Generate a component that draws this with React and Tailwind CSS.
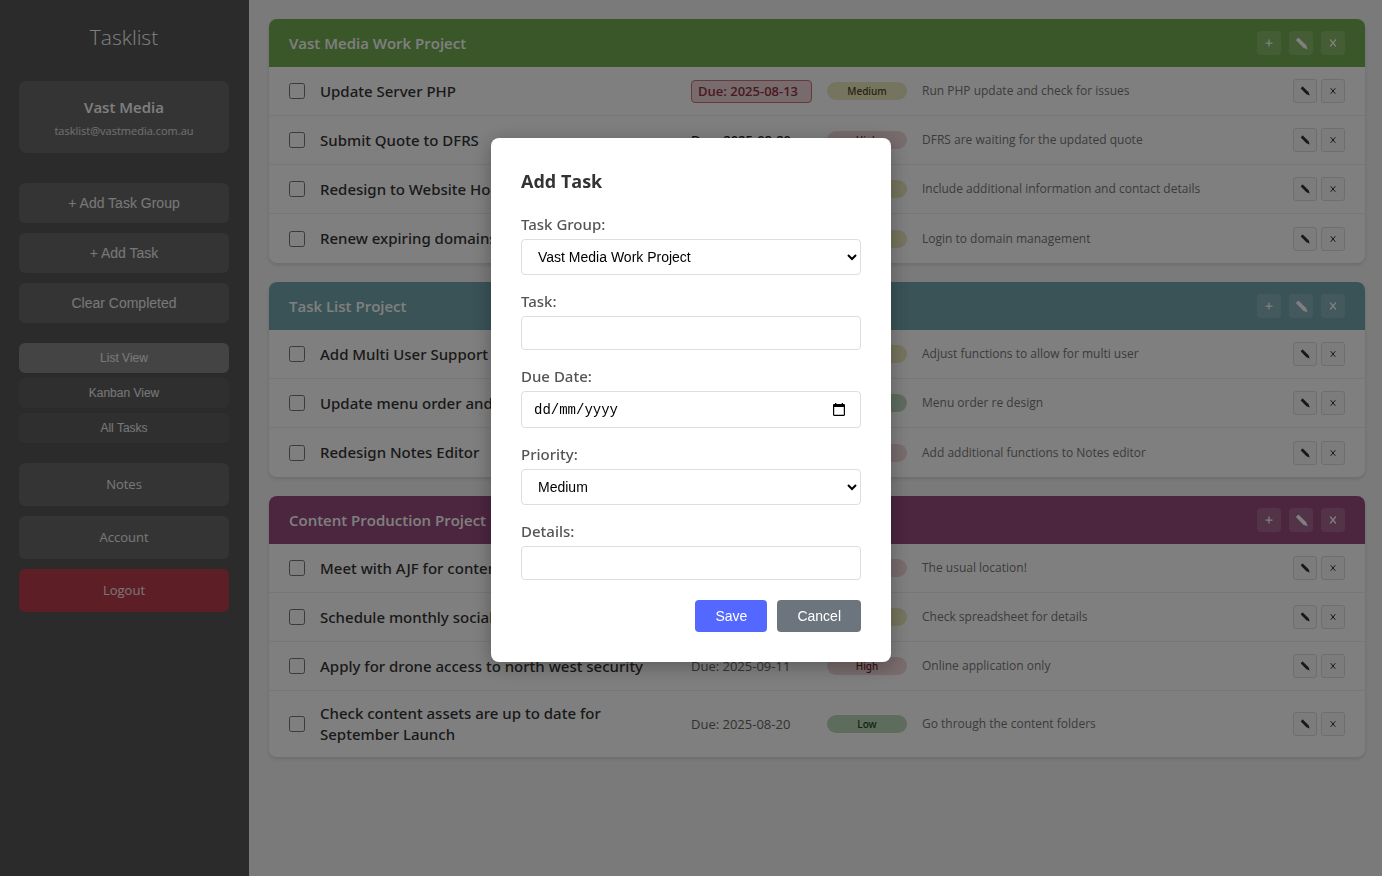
import React from 'react';

const groups = [
  {
    name: 'Vast Media Work Project',
    header: 'bg-[#74ae52]',
    tasks: [
      { title: 'Update Server PHP', due: '2025-08-13', state: 'overdue', priority: 'Medium', details: 'Run PHP update and check for issues' },
      { title: 'Submit Quote to DFRS', due: '2025-08-20', state: 'soon', priority: 'High', details: 'DFRS are waiting for the updated quote' },
      { title: 'Redesign to Website Home Page', due: '2025-08-22', priority: 'Medium', details: 'Include additional information and contact details' },
      { title: 'Renew expiring domains', due: '2025-08-29', priority: 'Medium', details: 'Login to domain management' },
    ],
  },
  {
    name: 'Task List Project',
    header: 'bg-[#74a6ae]',
    tasks: [
      { title: 'Add Multi User Support', due: '2025-08-30', priority: 'Medium', details: 'Adjust functions to allow for multi user' },
      { title: 'Update menu order and style', due: '2025-09-02', priority: 'Low', details: 'Menu order re design' },
      { title: 'Redesign Notes Editor', due: '2025-09-05', priority: 'High', details: 'Add additional functions to Notes editor' },
    ],
  },
  {
    name: 'Content Production Project',
    header: 'bg-[#984c7e]',
    tasks: [
      { title: 'Meet with AJF for content', due: '2025-08-25', priority: 'High', details: 'The usual location!' },
      { title: 'Schedule monthly socials', due: '2025-08-31', priority: 'Medium', details: 'Check spreadsheet for details' },
      { title: 'Apply for drone access to north west security', due: '2025-09-11', priority: 'High', details: 'Online application only' },
      { title: 'Check content assets are up to date for September Launch', due: '2025-08-20', priority: 'Low', details: 'Go through the content folders' },
    ],
  },
];

const badgeStyles = {
  High: 'bg-[#f0d8da] text-[#721c24]',
  Medium: 'bg-[#ebe8bc] text-[#4c4614]',
  Low: 'bg-[#bcd8bc] text-[#1e4620]',
};

const dueStyles = {
  overdue: 'rounded border border-[#c8747c] bg-[#f0d6da] px-1.5 font-semibold text-[#943440]',
  soon: 'font-semibold text-[#222]',
};

function Pencil({ className }) {
  return (
    <svg viewBox="0 0 12 12" className={className} fill="currentColor" aria-hidden="true">
      <path d="M2.6.9 1.200 2.300c-.3.3-.3.7 0 1l6.500 6.700 3.900 1.400-1.200-3.900L3.600.9c-.3-.3-.7-.3-1 0Z" />
    </svg>
  );
}

function Plus({ className }) {
  return (
    <svg viewBox="0 0 12 12" className={className} fill="none" stroke="currentColor" strokeWidth="1.5" aria-hidden="true">
      <path d="M6 1.800v8.400M1.800 6h8.400" />
    </svg>
  );
}

function Cross({ className }) {
  return (
    <svg viewBox="0 0 12 12" className={className} fill="none" stroke="currentColor" strokeWidth="1.5" aria-hidden="true">
      <path d="m2.500 1.800 7 8.400M9.500 1.800l-7 8.400" />
    </svg>
  );
}

function HeaderButton({ label, children }) {
  return (
    <button type="button" aria-label={label} className="flex size-6 items-center justify-center rounded bg-white/15 text-white">
      {children}
    </button>
  );
}

function RowButton({ label, children }) {
  return (
    <button type="button" aria-label={label} className="flex size-6 items-center justify-center rounded-[3px] border border-[#dcdce2] bg-[#f8f9fa] text-[#333]">
      {children}
    </button>
  );
}

function TaskRow({ task }) {
  return (
    <li className="flex min-h-[49px] items-center gap-[15px] border-b border-[#eee] px-5 py-3 last:border-b-0">
      <input type="checkbox" aria-label={task.title} className="size-4 shrink-0" />
      <span className="flex-1 font-['Noto_Sans','Open_Sans',sans-serif] text-[15px] leading-[21px] font-medium text-[#333]">{task.title}</span>
      <span className="w-[121px] shrink-0 text-[13px] leading-[21px] text-[#666]">
        <span className={`block ${dueStyles[task.state] || ''}`}>Due: {task.due}</span>
      </span>
      <span className={`w-20 shrink-0 rounded-full text-center font-['Noto_Sans','Open_Sans',sans-serif] text-[10px] leading-[18px] font-medium ${badgeStyles[task.priority]}`}>
        {task.priority}
      </span>
      <span className="flex-1 text-xs leading-5 text-[#777]">{task.details}</span>
      <span className="flex shrink-0 gap-1">
        <RowButton label="Edit task"><Pencil className="size-2.5" /></RowButton>
        <RowButton label="Delete task"><Cross className="size-2" /></RowButton>
      </span>
    </li>
  );
}

function TaskGroup({ group }) {
  return (
    <section className="overflow-hidden rounded-lg bg-white shadow-[0_2px_4px_rgba(0,0,0,0.12)]">
      <header className={`flex h-12 items-center gap-2 px-5 text-white ${group.header}`}>
        <h2 className="flex-1 text-[15px] font-semibold">{group.name}</h2>
        <HeaderButton label="Add task"><Plus className="size-2.5" /></HeaderButton>
        <HeaderButton label="Edit group"><Pencil className="size-[13px]" /></HeaderButton>
        <HeaderButton label="Delete group"><Cross className="size-2.5" /></HeaderButton>
      </header>
      <ul>
        {group.tasks.map((task) => <TaskRow key={task.title} task={task} />)}
      </ul>
    </section>
  );
}

function Sidebar() {
  const arial = "font-['Liberation_Sans',Arial,sans-serif]";
  return (
    <aside className="w-[249px] shrink-0 bg-[#575757] pr-5 pl-[19px] text-center text-white">
      <h1 className="pt-[21px] text-[21px] leading-8 font-light">Tasklist</h1>
      <div className="mt-7 rounded-lg bg-white/10 pt-4 pb-3">
        <p className="text-[15px] leading-5 font-semibold">Vast Media</p>
        <p className="mt-1 text-[11px] leading-5 text-white/80">tasklist@vastmedia.com.au</p>
      </div>
      <div className={`mt-[30px] flex flex-col gap-2.5 text-sm text-white/90 ${arial}`}>
        {['+ Add Task Group', '+ Add Task', 'Clear Completed'].map((label) => (
          <button key={label} type="button" className="h-10 rounded-md bg-white/10">{label}</button>
        ))}
      </div>
      <div className={`mt-5 flex flex-col gap-[5px] text-xs text-white/90 ${arial}`}>
        <button type="button" className="h-[30px] rounded-md bg-white/30">List View</button>
        <button type="button" className="h-[30px] rounded-md bg-white/5">Kanban View</button>
        <button type="button" className="h-[30px] rounded-md bg-white/5">All Tasks</button>
      </div>
      <nav className="mt-5 flex flex-col gap-2.5 text-[13px] leading-[43px] text-white/90">
        <a href="#notes" className="rounded-md bg-white/10">Notes</a>
        <a href="#account" className="rounded-md bg-white/10">Account</a>
        <a href="#logout" className="rounded-md bg-[#bb3d4c]">Logout</a>
      </nav>
    </aside>
  );
}

const labelClass = "mb-[5px] block font-['Noto_Sans','Open_Sans',sans-serif] text-[15px] leading-5 font-medium text-[#555]";
const fieldClass = "block w-full rounded border border-[#ddd] bg-white px-3 text-sm text-black font-['Liberation_Sans',Arial,sans-serif]";

function AddTaskDialog() {
  return (
    <div className="fixed inset-0 flex items-start justify-center bg-black/50 pt-[138px]">
      <form role="dialog" aria-modal="true" aria-labelledby="dialog-title" className="w-[400px] rounded-lg bg-white p-[30px] shadow-[0_4px_20px_rgba(0,0,0,0.3)]">
        <h2 id="dialog-title" className="mb-5 text-lg leading-[26px] font-bold text-[#333]">Add Task</h2>
        <div className="mb-5 flex flex-col gap-4">
          <div>
            <label htmlFor="group" className={labelClass}>Task Group:</label>
            <select id="group" className={`h-9 ${fieldClass}`}>
              {groups.map((g) => <option key={g.name}>{g.name}</option>)}
            </select>
          </div>
          <div>
            <label htmlFor="task" className={labelClass}>Task:</label>
            <input id="task" type="text" className={`h-[34px] ${fieldClass}`} />
          </div>
          <div>
            <label htmlFor="due" className={labelClass}>Due Date:</label>
            <div className="flex h-[37px] items-center rounded border border-[#ddd] pr-[15px] pl-3">
              <input id="due" type="text" placeholder="dd/mm/yyyy" className="min-w-0 flex-1 bg-transparent font-['Liberation_Mono',monospace] text-sm text-black outline-none placeholder:text-black" />
              <button type="button" aria-label="Open calendar" className="text-black">
                <svg viewBox="0 0 12 13" className="h-[13px] w-3" fill="currentColor" fillRule="evenodd" aria-hidden="true">
                  <path d="M2 0h1.3v1h5.4V0H10v1h.8c.7 0 1.2.5 1.2 1.2v9.6c0 .7-.5 1.2-1.2 1.2H1.2C.5 13 0 12.500 0 11.800V2.200C0 1.500.5 1 1.200 1H2V0ZM1.200 4v7.800h9.600V4H1.200Z" />
                </svg>
              </button>
            </div>
          </div>
          <div>
            <label htmlFor="priority" className={labelClass}>Priority:</label>
            <select id="priority" defaultValue="Medium" className={`h-9 ${fieldClass}`}>
              <option>Low</option>
              <option>Medium</option>
              <option>High</option>
            </select>
          </div>
          <div>
            <label htmlFor="details" className={labelClass}>Details:</label>
            <input id="details" type="text" className={`h-[34px] ${fieldClass}`} />
          </div>
        </div>
        <div className="flex justify-end gap-2.5 font-['Liberation_Sans',Arial,sans-serif] text-sm text-white">
          <button type="submit" className="h-8 rounded bg-[#5468ff] px-5">Save</button>
          <button type="button" className="h-8 rounded bg-[#6c757d] px-5">Cancel</button>
        </div>
      </form>
    </div>
  );
}

export default function App() {
  return (
    <div className="flex min-h-screen bg-[#f5f5f5] font-['Open_Sans','Noto_Sans',sans-serif]">
      <Sidebar />
      <main className="flex min-w-0 flex-1 flex-col gap-[19px] pt-[19px] pr-[17px] pb-5 pl-5">
        {groups.map((group) => <TaskGroup key={group.name} group={group} />)}
      </main>
      <AddTaskDialog />
    </div>
  );
}
